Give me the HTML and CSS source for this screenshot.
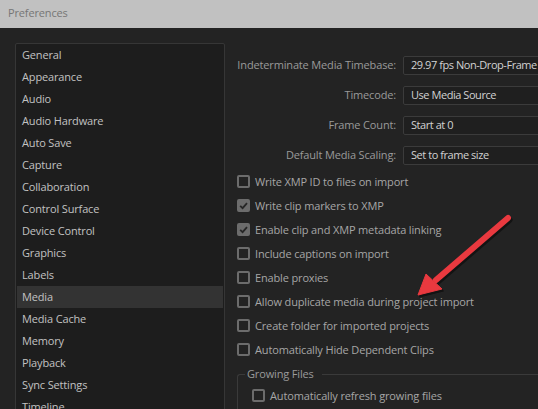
FILE: index.html
```html
<!DOCTYPE html>
<html>
<head>
<meta charset="utf-8">
<link rel="stylesheet" href="styles.css">
</head>
<body>
<div class="titlebar">Preferences</div>
<div class="main">
  <ul class="cats">
    <li>General</li>
    <li>Appearance</li>
    <li>Audio</li>
    <li>Audio Hardware</li>
    <li>Auto Save</li>
    <li>Capture</li>
    <li>Collaboration</li>
    <li>Control Surface</li>
    <li>Device Control</li>
    <li>Graphics</li>
    <li>Labels</li>
    <li class="sel">Media</li>
    <li>Media Cache</li>
    <li>Memory</li>
    <li>Playback</li>
    <li>Sync Settings</li>
    <li>Timeline</li>
  </ul>
  <div class="pane">
    <div class="form">
      <label class="lbl">Indeterminate Media Timebase:</label><div class="dd">29.97 fps Non-Drop-Frame</div>
      <label class="lbl">Timecode:</label><div class="dd">Use Media Source</div>
      <label class="lbl">Frame Count:</label><div class="dd">Start at 0</div>
      <label class="lbl">Default Media Scaling:</label><div class="dd">Set to frame size</div>
    </div>
    <div class="checks">
      <div class="chk"><span class="box"></span>Write XMP ID to files on import</div>
      <div class="chk"><span class="box on"><svg viewBox="0 0 13 13"><polyline points="3.2,6.8 5.6,9.2 10,4.2"/></svg></span>Write clip markers to XMP</div>
      <div class="chk"><span class="box on"><svg viewBox="0 0 13 13"><polyline points="3.2,6.8 5.6,9.2 10,4.2"/></svg></span>Enable clip and XMP metadata linking</div>
      <div class="chk"><span class="box"></span>Include captions on import</div>
      <div class="chk"><span class="box"></span>Enable proxies</div>
      <div class="chk"><span class="box"></span>Allow duplicate media during project import</div>
      <div class="chk"><span class="box"></span>Create folder for imported projects</div>
      <div class="chk"><span class="box"></span>Automatically Hide Dependent Clips</div>
    </div>
    <fieldset class="group">
      <legend>Growing Files</legend>
      <div class="chk"><span class="box"></span>Automatically refresh growing files</div>
    </fieldset>
  </div>
</div>
<svg class="arrow" width="538" height="409" viewBox="0 0 538 409">
  <g transform="translate(1.5,2)" opacity="0.45" fill="#000" stroke="#000">
    <line x1="508" y1="218" x2="436" y2="280" stroke-width="6" stroke-linecap="round"/>
    <polygon points="418,295 426,274 442,289" stroke-width="1"/>
  </g>
  <line x1="508" y1="218" x2="436" y2="280" stroke="#e9393f" stroke-width="6" stroke-linecap="round"/>
  <polygon points="418,295 426,274 442,289" fill="#e9393f" stroke="#e9393f" stroke-width="1" stroke-linejoin="round"/>
</svg>
</body>
</html>
```
FILE: styles.css
```css
html, body {
  margin: 0;
  padding: 0;
  width: 538px;
  height: 409px;
  overflow: hidden;
  background: #232323;
  font-family: "Open Sans", "Noto Sans", sans-serif;
  font-size: 11px;
  letter-spacing: -0.15px;
}

.titlebar {
  height: 28px;
  line-height: 26px;
  background: #c1c1c1;
  color: #767676;
  padding-left: 8px;
  box-sizing: border-box;
}

.main {
  display: flex;
  padding: 15px 0 0 15px;
}

.cats {
  list-style: none;
  margin: 0;
  padding: 0 1px;
  width: 210px;
  height: 420px;
  box-sizing: border-box;
  border: 1px solid #363636;
  border-radius: 2px;
  background: #1d1d1d;
  flex-shrink: 0;
}

.cats li {
  height: 22px;
  line-height: 22px;
  padding-left: 5px;
  color: #c2c2c2;
}

.cats li.sel {
  background: #333333;
}

.pane {
  flex: 1;
  padding: 13px 0 0 12px;
  min-width: 0;
}

.form {
  display: grid;
  grid-template-columns: 159px 400px;
  column-gap: 7px;
  row-gap: 11px;
}

.lbl {
  text-align: right;
  color: #9a9a9a;
  height: 19px;
  line-height: 18px;
  white-space: nowrap;
}

.dd {
  height: 19px;
  line-height: 16px;
  box-sizing: border-box;
  border: 1px solid #3b3b3b;
  border-radius: 2px;
  background: #1f1f1f;
  color: #d2d2d2;
  padding-left: 7px;
  white-space: nowrap;
  letter-spacing: -0.45px;
}

.checks {
  margin-top: 4px;
}

.chk {
  height: 24px;
  display: flex;
  align-items: center;
  gap: 5px;
  color: #a6a6a6;
  white-space: nowrap;
}

.box {
  width: 13px;
  height: 13px;
  box-sizing: border-box;
  border: 2px solid #6c6c6c;
  border-radius: 2px;
  flex-shrink: 0;
  display: flex;
}

.box.on {
  background: #6c6c6c;
  border-color: #6c6c6c;
}

.box svg {
  width: 13px;
  height: 13px;
  margin: -2px;
}

.box svg polyline {
  fill: none;
  stroke: #262626;
  stroke-width: 1.8;
}

.group {
  margin: 5px 0 0 0;
  padding: 2px 0 10px 14px;
  border: 1px solid #3a3a3a;
  border-right: none;
  border-radius: 3px 0 0 0;
}

.group legend {
  color: #9a9a9a;
  padding: 0 8px 0 2px;
  margin-left: -7px;
  line-height: 16px;
}

.group .chk {
  height: 22px;
}

.arrow {
  position: absolute;
  left: 0;
  top: 0;
  pointer-events: none;
}
```
